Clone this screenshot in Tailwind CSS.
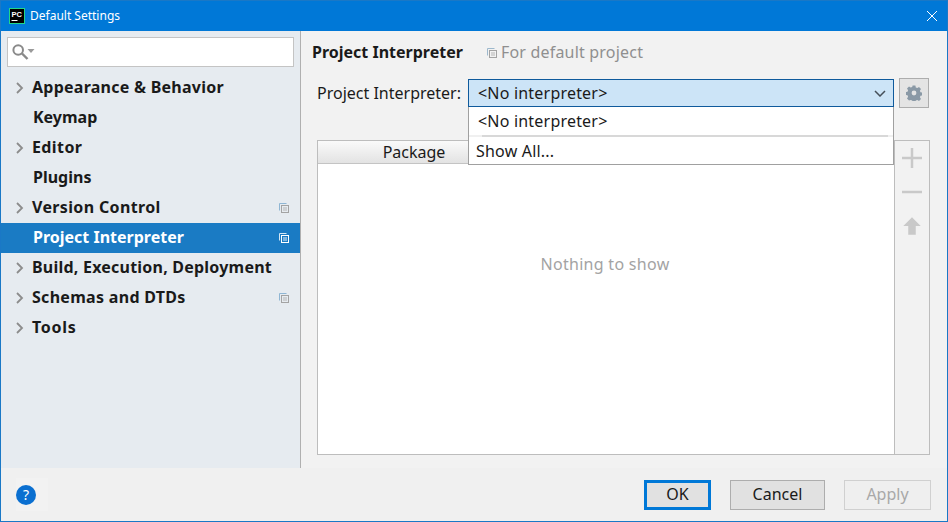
<!DOCTYPE html>
<html lang="en">
<head>
  <meta charset="UTF-8" />
  <title>Default Settings</title>
  <script src="https://cdn.jsdelivr.net/npm/@tailwindcss/browser@4"></script>
</head>
<body class="font-['Noto_Sans','Open_Sans',sans-serif] text-[16px] text-[#1a1a1a] overflow-hidden">
  <div class="w-[948px] h-[522px] flex flex-col bg-[#f2f2f2] border border-[#1a78c6]">

    <!-- Title bar -->
    <header class="h-[30px] shrink-0 bg-[#0078d7] flex items-center text-white text-[12px] pl-[8px] pr-[9px]">
      <svg width="16" height="16" viewBox="0 0 16 16" class="mr-[5px]">
        <rect x="0.5" y="0.5" width="15" height="15" fill="#000" stroke="#21d789" />
        <rect x="2.5" y="12" width="6" height="1" fill="#fff" />
        <text x="2.5" y="9" font-size="7.5" font-weight="700" fill="#fff" font-family="Liberation Sans">PC</text>
      </svg>
      <span>Default Settings</span>
      <svg width="12" height="12" viewBox="0 0 12 12" class="ml-auto" fill="none" stroke="#fff" stroke-width="1">
        <path d="M1 1l10 10M11 1L1 11" />
      </svg>
    </header>

    <div class="flex flex-1 min-h-0">
      <!-- Sidebar -->
      <aside class="w-[300px] shrink-0 bg-[#e6ebf0] border-r border-[#b0b0b0] font-bold">
        <div class="h-[42px] pt-[6px] pl-[6px] pr-[6px]">
          <div class="h-[30px] bg-white border-[1.5px] border-[#c4c4c4] flex items-center pl-[4px]">
            <svg width="24" height="18" viewBox="0 0 24 18" fill="none">
              <circle cx="6.2" cy="7" r="4.8" stroke="#8a8a8a" stroke-width="2" />
              <path d="M10 10.5l5.5 5.5" stroke="#8a8a8a" stroke-width="2.4" />
              <path d="M15.5 6h7l-3.5 4z" fill="#9a9a9a" />
            </svg>
          </div>
        </div>
        <ul>
          <li class="h-[30px] flex items-center pl-[14px] pr-[10px] tracking-[0.25px]">
            <svg width="10" height="14" viewBox="0 0 10 14" fill="none" stroke="#8c8c8c" stroke-width="1.8" class="mr-[7px]"><path d="M2 2l5 5-5 5" /></svg>
            <span class="-mt-[2px]">Appearance &amp; Behavior</span>
          </li>
          <li class="h-[30px] flex items-center pl-[32px] pr-[10px]"><span class="-mt-[2px]">Keymap</span></li>
          <li class="h-[30px] flex items-center pl-[14px] pr-[10px] tracking-[0.4px]">
            <svg width="10" height="14" viewBox="0 0 10 14" fill="none" stroke="#8c8c8c" stroke-width="1.8" class="mr-[7px]"><path d="M2 2l5 5-5 5" /></svg>
            <span class="-mt-[2px]">Editor</span>
          </li>
          <li class="h-[30px] flex items-center pl-[32px] pr-[10px]"><span class="-mt-[2px]">Plugins</span></li>
          <li class="h-[30px] flex items-center pl-[14px] pr-[10px] tracking-[0.35px]">
            <svg width="10" height="14" viewBox="0 0 10 14" fill="none" stroke="#8c8c8c" stroke-width="1.8" class="mr-[7px]"><path d="M2 2l5 5-5 5" /></svg>
            <span class="-mt-[2px]">Version Control</span>
            <svg width="12" height="12" viewBox="0 0 12 12" fill="none" class="ml-auto"><path d="M1.5 8.5v-7h7" stroke="#8fb6d4" /><rect x="3.5" y="3.5" width="7" height="7" fill="#e6ebf0" stroke="#a3a3a3" /><path d="M5 6h4M5 8h4" stroke="#b5b5b5" /></svg>
          </li>
          <li class="h-[30px] flex items-center pl-[32px] pr-[10px] bg-[#1a7bc4] text-white">
            <span class="-mt-[2px]">Project Interpreter</span>
            <svg width="12" height="12" viewBox="0 0 12 12" fill="none" class="ml-auto"><path d="M1.5 8.5v-7h7" stroke="#d4e6f4" /><rect x="3.5" y="3.5" width="7" height="7" fill="#1a7bc4" stroke="#fff" /><path d="M5 6h4M5 8h4" stroke="#e6f0f8" /></svg>
          </li>
          <li class="h-[30px] flex items-center pl-[14px] pr-[10px] tracking-[0.22px]">
            <svg width="10" height="14" viewBox="0 0 10 14" fill="none" stroke="#8c8c8c" stroke-width="1.8" class="mr-[7px]"><path d="M2 2l5 5-5 5" /></svg>
            <span class="-mt-[2px]">Build, Execution, Deployment</span>
          </li>
          <li class="h-[30px] flex items-center pl-[14px] pr-[10px] tracking-[0.3px]">
            <svg width="10" height="14" viewBox="0 0 10 14" fill="none" stroke="#8c8c8c" stroke-width="1.8" class="mr-[7px]"><path d="M2 2l5 5-5 5" /></svg>
            <span class="-mt-[2px]">Schemas and DTDs</span>
            <svg width="12" height="12" viewBox="0 0 12 12" fill="none" class="ml-auto"><path d="M1.5 8.5v-7h7" stroke="#8fb6d4" /><rect x="3.5" y="3.5" width="7" height="7" fill="#e6ebf0" stroke="#a3a3a3" /><path d="M5 6h4M5 8h4" stroke="#b5b5b5" /></svg>
          </li>
          <li class="h-[30px] flex items-center pl-[14px] pr-[10px] tracking-[0.7px]">
            <svg width="10" height="14" viewBox="0 0 10 14" fill="none" stroke="#8c8c8c" stroke-width="1.8" class="mr-[7px]"><path d="M2 2l5 5-5 5" /></svg>
            <span class="-mt-[2px]">Tools</span>
          </li>
        </ul>
      </aside>

      <!-- Main panel -->
      <main class="flex-1 min-w-0 pl-[11px] pr-[17px] relative">
        <div class="h-[44px] flex items-center">
          <h1 class="font-bold -mt-[2px]">Project Interpreter</h1>
          <span class="flex items-center text-[#8f8f8f] ml-[23px] -mt-[2px] tracking-[0.2px]">
            <svg width="12" height="12" viewBox="0 0 12 12" fill="none" class="mr-[3px] mt-[2px]"><path d="M1.5 8.5v-7h7" stroke="#9db8cc" /><rect x="3.5" y="3.5" width="7" height="7" fill="#f2f2f2" stroke="#a3a3a3" /><path d="M5 6h4M5 8h4" stroke="#b5b5b5" /></svg>
            For default project
          </span>
        </div>

        <div class="flex items-center h-[30px] ml-[5px] mt-[3px]">
          <span class="w-[151px] -mt-[1px]">Project Interpreter:</span>
          <div class="w-[426px] h-[28px] bg-[#cce4f7] border border-[#0f5a9c] flex items-center pl-[9px] pr-[7px] tracking-[0.2px]">
            <span class="-mt-[1px]">&lt;No interpreter&gt;</span>
            <svg width="12" height="7" viewBox="0 0 12 7" fill="none" stroke="#46505a" stroke-width="1.5" class="ml-auto"><path d="M1 1l5 5 5-5" /></svg>
          </div>
          <button class="w-[30px] h-[30px] ml-[5px] bg-[#e4e4e4] border border-[#adadad] flex items-center justify-center">
            <svg width="16" height="16" viewBox="0 0 16 16" fill="#8a99a6">
              <path fill-rule="evenodd" d="M6.6 0.5h2.8l.4 2 1.5.6 1.7-1.1 2 2-1.1 1.7.6 1.5 2 .4v2.8l-2 .4-.6 1.5 1.1 1.7-2 2-1.7-1.1-1.5.6-.4 2H6.6l-.4-2-1.5-.6L3 15.5l-2-2 1.1-1.7-.6-1.5-2-.4V7.1l2-.4.6-1.5L1 3.5l2-2 1.7 1.1 1.5-.6zM8 5.6a2.4 2.4 0 1 0 0 4.8 2.4 2.4 0 0 0 0-4.8z" />
            </svg>
          </button>
        </div>

        <div class="flex mt-[32px] ml-[5px] h-[315px]">
          <!-- Package table -->
          <div class="w-[578px] border border-[#bdbdbd] bg-white flex flex-col">
            <div class="h-[23px] shrink-0 bg-gradient-to-b from-[#fafafa] to-[#e3e3e3] border-b border-[#c4c4c4] w-[152px] flex justify-center">
              <span class="-mt-[1px] ml-[40px]">Package</span>
            </div>
            <div class="flex-1 flex items-center justify-center text-[#a3a3a3] pb-[90px] pr-[2px] tracking-[0.3px]">Nothing to show</div>
          </div>
          <!-- Table toolbar -->
          <div class="w-[35px] border border-l-0 border-[#bdbdbd] bg-[#f2f2f2] flex flex-col items-center pt-[7px] gap-[14px]">
            <svg width="20" height="20" viewBox="0 0 16 16" fill="#c9c9c9"><path d="M7 0h2v7h7v2H9v7H7V9H0V7h7z" /></svg>
            <svg width="20" height="20" viewBox="0 0 16 16" fill="#c9c9c9"><path d="M0 7h16v2H0z" /></svg>
            <svg width="20" height="20" viewBox="0 0 16 16" fill="#c9c9c9"><path d="M8 1l7 7h-4v7H5V8H1z" /></svg>
          </div>
        </div>

        <!-- Open combo dropdown -->
        <div class="absolute left-[167px] top-[76px] w-[426px] h-[58px] bg-white border border-t-0 border-[#a0a0a0] z-10 tracking-[0.2px]">
          <div class="h-[28px] pl-[9px] flex items-center"><span class="-mt-[1px]">&lt;No interpreter&gt;</span></div>
          <div class="h-[2px] bg-[#f0f0f0] flex justify-end"><div class="w-[406px] mr-[5px] bg-[#d8d8d8]"></div></div>
          <div class="pl-[7px] h-[27px] flex items-center"><span>Show All...</span></div>
        </div>
      </main>
    </div>

    <!-- Footer -->
    <footer class="h-[53px] shrink-0 bg-[#f0f0f0] flex items-center pl-[15px] pr-[16px]">
      <div class="w-[32px] h-[33px] bg-[#f2f2f2] flex items-center">
        <div class="w-[20px] h-[20px] rounded-full bg-[#0a6fd0] text-white text-[14px] flex items-center justify-center">?</div>
      </div>
      <button class="ml-auto w-[67px] h-[30px] bg-[#e1e1e1] border-[3px] border-[#0078d7]"><span class="block -mt-[2px]">OK</span></button>
      <button class="ml-[19px] w-[95px] h-[30px] bg-[#e1e1e1] border border-[#adadad]"><span class="block -mt-[2px]">Cancel</span></button>
      <button class="ml-[19px] w-[87px] h-[30px] bg-[#efefef] border border-[#d0d0d0] text-[#a8a8a8]"><span class="block -mt-[2px]">Apply</span></button>
    </footer>
  </div>
</body>
</html>
